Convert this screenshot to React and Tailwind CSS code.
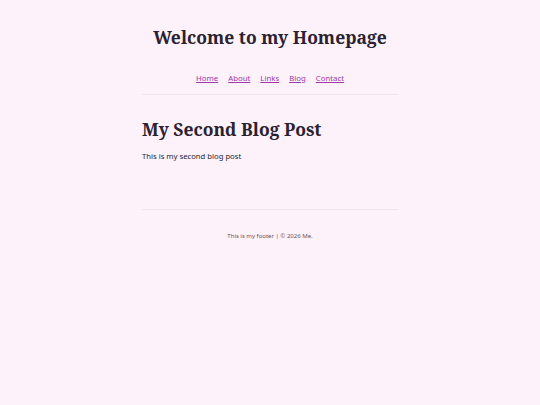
export default function App() {
  return (
    <div className="min-h-[405px] w-full bg-[#fdf2fa] font-['Noto_Sans',sans-serif] text-[#2a2230]">
      <div className="mx-auto w-[256px] pt-[25px]">
        <header className="text-center">
          <h1 className="whitespace-nowrap font-['Noto_Serif',serif] text-[17.5px] font-bold leading-[24px]">Welcome to my Homepage</h1>
          <nav className="mt-[23px] flex justify-center gap-[10px] text-[7.8px] leading-[12px] text-[#a038a8]">
            <a href="#" className="underline">Home</a>
            <a href="#" className="underline">About</a>
            <a href="#" className="underline">Links</a>
            <a href="#" className="underline">Blog</a>
            <a href="#" className="underline">Contact</a>
          </nav>
          <div className="mt-[10px] h-px bg-[#f1e4ee]" />
        </header>
        <main className="pt-[23px]">
          <h2 className="whitespace-nowrap font-['Noto_Serif',serif] text-[17.5px] font-bold leading-[22px]">My Second Blog Post</h2>
          <p className="mt-[10px] text-[7.7px] leading-[12px]">This is my second blog post</p>
        </main>
        <div className="mt-[47px] h-px bg-[#f1e4ee]" />
        <footer className="pt-[21px] text-center text-[6px] leading-[10px] text-[#5f5566]">This is my footer | © 2026 Me.</footer>
      </div>
    </div>
  );
}
